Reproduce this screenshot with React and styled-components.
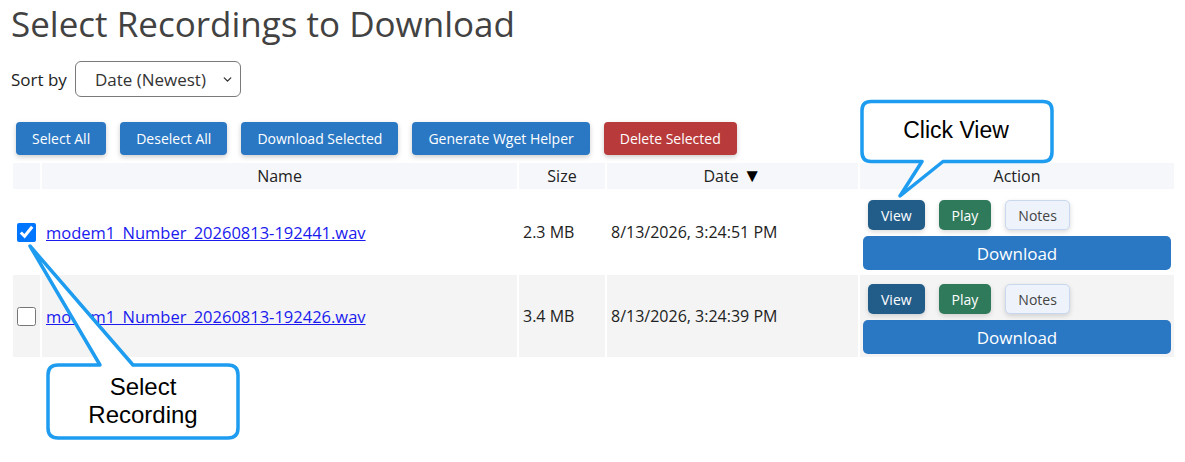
import React from "react";
import styled, { createGlobalStyle } from "styled-components";
import { ChevronDown } from "lucide-react";

const GlobalStyle = createGlobalStyle`
    body {
        margin: 0;
        background: #ffffff;
        font-family: "Open Sans", "Liberation Sans", sans-serif;
        color: #222222;
    }
`;

const Page = styled.div`
    position: relative;
    width: 1185px;
    height: 462px;
    padding: 0 9px 0 10px;
    box-sizing: border-box;
    overflow: hidden;
`;

const Title = styled.h1`
    margin: 0;
    padding-left: 1px;
    font-size: 35px;
    font-weight: 400;
    line-height: 48px;
    color: #424242;
`;

const SortRow = styled.div`
    display: flex;
    align-items: center;
    gap: 8px;
    margin-top: 13px;
    padding-left: 1px;
    font-size: 17px;
    color: #222;
`;

const SelectBox = styled.div`
    display: flex;
    align-items: center;
    justify-content: space-between;
    width: 166px;
    height: 36px;
    box-sizing: border-box;
    padding: 0 6px 0 19px;
    border: 1px solid #7a7a7a;
    border-radius: 6px;
    font-size: 17px;
    color: #333;
    background: #fff;
`;

const Toolbar = styled.div`
    display: flex;
    gap: 14px;
    margin-top: 25px;
    padding-left: 6px;
`;

const ToolButton = styled.button`
    height: 33px;
    padding: 0 16px;
    border: none;
    border-radius: 4px;
    font-family: inherit;
    font-size: 14px;
    color: #fff;
    background: ${(p) => (p.$danger ? "#b83a3a" : "#2a78c4")};
    box-shadow: 0 2px 5px rgba(0, 0, 0, 0.2);
`;

const Table = styled.table`
    margin: 6px 0 0 1px;
    width: 1165px;
    table-layout: fixed;
    border-collapse: separate;
    border-spacing: 2px;
    font-size: 16px;
`;

const Th = styled.th`
    padding: 2px 4px;
    line-height: 22px;
    font-weight: 400;
    background: #f5f7fa;
    color: #222;
    text-align: center;
`;

const SortArrow = styled.span`
    font-size: 19px;
    line-height: 1;
    color: #000;
`;

const Row = styled.tr`
    background: ${(p) => (p.$shade ? "#f4f4f4" : "#ffffff")};
`;

const Td = styled.td`
    padding: 0 4px;
    vertical-align: middle;
    white-space: nowrap;
`;

const CheckCell = styled.td`
    padding: 0 0 0 4px;
    vertical-align: middle;

    input {
        width: 19px;
        height: 19px;
        margin: 0;
        display: block;
    }
`;

const FileLink = styled.a`
    font-size: 16.5px;
    color: #1a1aee;
    text-decoration: underline;
`;

const ActionCell = styled.td`
    padding: 3px;
    vertical-align: middle;
`;

const SmallRow = styled.div`
    display: flex;
    gap: 14px;
    padding: 6px 5px 0;
    margin-bottom: 6px;
`;

const SmallButton = styled.button`
    height: 30px;
    padding: 0 12px;
    border-radius: 5px;
    font-family: inherit;
    font-size: 14px;
    border: 1px solid ${(p) => (p.$kind === "notes" ? "#c9d8ee" : "transparent")};
    color: ${(p) => (p.$kind === "notes" ? "#444" : "#fff")};
    background: ${(p) =>
        p.$kind === "view" ? "#225d8a" : p.$kind === "play" ? "#2e7a5b" : "#eef3fb"};
    box-shadow: 0 2px 5px rgba(0, 0, 0, 0.15);
`;

const DownloadButton = styled.button`
    display: block;
    width: 100%;
    height: 34px;
    border: none;
    border-radius: 5px;
    font-family: inherit;
    font-size: 17px;
    color: #fff;
    background: #2a78c4;
`;

const Callouts = styled.svg`
    position: absolute;
    top: 0;
    left: 0;
    pointer-events: none;

    path {
        fill: #ffffff;
        stroke: #1e9cf0;
        stroke-width: 3.5;
        stroke-linejoin: round;
    }

    text {
        font-family: "Liberation Sans", Arial, sans-serif;
        fill: #000;
        text-anchor: middle;
    }
`;

const recordings = [
    { name: "modem1_Number_20260813-192441.wav", size: "2.3 MB", date: "8/13/2026, 3:24:51 PM", checked: true },
    { name: "modem1_Number_20260813-192426.wav", size: "3.4 MB", date: "8/13/2026, 3:24:39 PM", checked: false },
];

const App = () => {
    return (
        <Page>
            <GlobalStyle />
            <Title>Select Recordings to Download</Title>
            <SortRow>
                <span>Sort by</span>
                <SelectBox>
                    <span>Date (Newest)</span>
                    <ChevronDown size={13} strokeWidth={2.5} color="#333" />
                </SelectBox>
            </SortRow>
            <Toolbar>
                <ToolButton>Select All</ToolButton>
                <ToolButton>Deselect All</ToolButton>
                <ToolButton>Download Selected</ToolButton>
                <ToolButton>Generate Wget Helper</ToolButton>
                <ToolButton $danger>Delete Selected</ToolButton>
            </Toolbar>
            <Table>
                <colgroup>
                    <col style={{ width: 27 }} />
                    <col style={{ width: 475 }} />
                    <col style={{ width: 86 }} />
                    <col style={{ width: 251 }} />
                    <col style={{ width: 314 }} />
                </colgroup>
                <thead>
                    <tr>
                        <Th></Th>
                        <Th>Name</Th>
                        <Th>Size</Th>
                        <Th>
                            Date <SortArrow>▼</SortArrow>
                        </Th>
                        <Th>Action</Th>
                    </tr>
                </thead>
                <tbody>
                    {recordings.map((r, i) => (
                        <Row key={r.name} $shade={i % 2 === 1}>
                            <CheckCell>
                                <input type="checkbox" defaultChecked={r.checked} />
                            </CheckCell>
                            <Td>
                                <FileLink href="#">{r.name}</FileLink>
                            </Td>
                            <Td>{r.size}</Td>
                            <Td>{r.date}</Td>
                            <ActionCell>
                                <SmallRow>
                                    <SmallButton $kind="view">View</SmallButton>
                                    <SmallButton $kind="play">Play</SmallButton>
                                    <SmallButton $kind="notes">Notes</SmallButton>
                                </SmallRow>
                                <DownloadButton>Download</DownloadButton>
                            </ActionCell>
                        </Row>
                    ))}
                </tbody>
            </Table>
            <Callouts width="1185" height="462" viewBox="0 0 1185 462">
                <path d="M 871 101.5 H 1043 Q 1052 101.5 1052 110.5 V 152 Q 1052 161.5 1043 161.5 H 943 L 900 196 L 922 161.5 H 871 Q 862 161.5 862 152 V 110.5 Q 862 101.5 871 101.5 Z" />
                <text x="956" y="138" fontSize="23">Click View</text>
                <path d="M 58 365 H 100 L 30 246 L 133 365 H 228 Q 238 365 238 375 V 428 Q 238 438 228 438 H 58 Q 48 438 48 428 V 375 Q 48 365 58 365 Z" />
                <text x="143" y="395" fontSize="24">Select</text>
                <text x="143" y="423" fontSize="24">Recording</text>
            </Callouts>
        </Page>
    );
};

export default App;
